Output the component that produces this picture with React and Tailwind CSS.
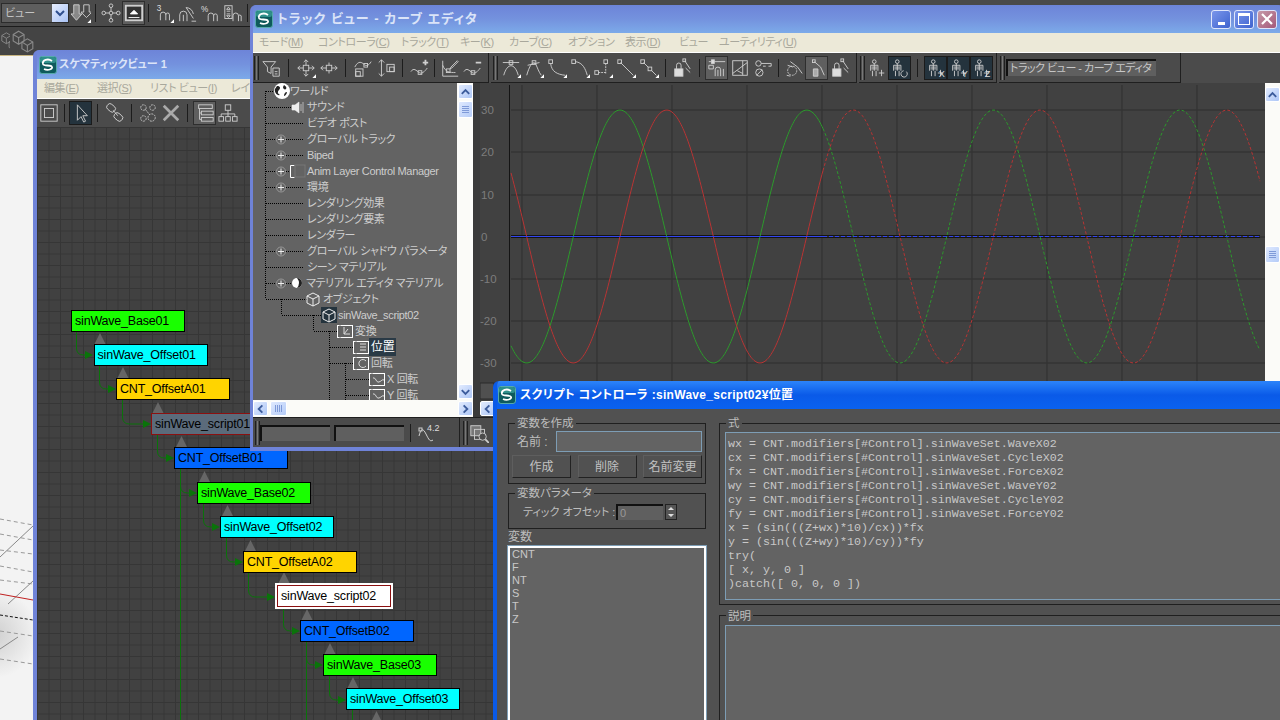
import React from "react";

const icons = {
  filter: <><path d="M1 4h14l-5 6v7l-4-2v-5z" /><path d="M12 11h7v9h-7z" /><path d="M14 15h3M14 17.500h3" /></>,
  move: <><path d="M11 2v18M2 11h18M8.500 4.500 11 2l2.500 2.500M8.500 17.500 11 20l2.500-2.500M4.500 8.500 2 11l2.500 2.500M17.500 8.500 20 11l-2.500 2.500" /><rect x="8" y="8" width="6" height="6" fill="#4c4c4c" /></>,
  moveH: <><path d="M11 5v12M2 11h18M4.500 8.500 2 11l2.500 2.500M17.500 8.500 20 11l-2.500 2.500" /><rect x="8" y="8" width="6" height="6" fill="#4c4c4c" /></>,
  scaleT: <><path d="M2 10c4-8 8-5 10-3s5 2 8-3" /><rect x="12" y="6" width="4" height="4" /><rect x="3" y="12" width="8" height="8" /><rect x="3" y="15" width="5" height="5" /></>,
  scaleV: <><path d="M6 2v18M3 5l3-3 3 3M3 17l3 3 3-3" /><rect x="12" y="7" width="8" height="8" /><rect x="15" y="10" width="5" height="5" /></>,
  addKey: <><path d="M1 15c3-5 6-1 9 1s6-1 9-5" /><rect x="9" y="14" width="4" height="4" /><path d="M14 5h6M17 2v6" strokeWidth="2" /></>,
  pen: <><path d="M3 3v17h17" /><path d="M3 8c3 8 8 8 14 8" /><rect x="7" y="12" width="4" height="4" /><path d="M12 10l7-7 1 1-7 7-2 1z" /></>,
  subKey: <><path d="M1 15c3-5 6-1 9 1s6-1 9-5" /><rect x="9" y="14" width="4" height="4" /><path d="M14 5h6" strokeWidth="2" /></>,
  tan1: <><path d="M2 5h18" /><rect x="9" y="3" width="4" height="4" /><path d="M3 19c4-14 12-14 16 0" /></>,
  tan2: <><path d="M4 8 17 5" /><rect x="9" y="3" width="4" height="4" /><path d="M3 19c4-14 8-16 10-12s3 8 6 12" /></>,
  tan3: <><rect x="2" y="2" width="4" height="4" /><path d="M4 6c1 9 7 12 16 13" /></>,
  tan4: <><rect x="2" y="2" width="4" height="4" /><path d="M6 4c8 1 11 8 13 15" /></>,
  step: <><rect x="12" y="2" width="4" height="4" /><rect x="2" y="14" width="4" height="4" /><path d="M6 16h8M14 6v12" strokeDasharray="2 1" /></>,
  line: <><rect x="2" y="2" width="4" height="4" /><path d="M5 5 19 19" /></>,
  line2: <><rect x="2" y="2" width="4" height="4" /><rect x="10" y="10" width="4" height="4" /><path d="M5 5l5 5M14 14l5 5" /></>,
  lock: <><path d="M14 3 20 12" /><rect x="12" y="1" width="3" height="3" /><rect x="3" y="12" width="9" height="8" fill="#ddd" /><path d="M5 12V8a2.500 2.500 0 0 1 5 0v4" /><path d="M15 11l5 5" /></>,
  magnet: <><path d="M2 4h3M8 4h12" /><rect x="5" y="2" width="3" height="4" fill="#ddd" /><path d="M9 20v-7a3 3 0 0 1 6 0v7M12 20v-7M18 20v-8" /><path d="M2 8h5v4H2z" /></>,
  box: <><rect x="3" y="3" width="16" height="16" /><path d="M3 17 19 5M8 14l6 3M14 3v16" /></>,
  key: <><circle cx="6" cy="6" r="3" /><path d="M9 6h11v3h-3M14 9h-3" /><circle cx="7" cy="16" r="4" /><path d="M4 19 10 13" /></>,
  ik1: <><path d="M7 4l8 6 5 7M4 8l6 2" /><circle cx="9" cy="14" r="5" strokeDasharray="2 1" /><path d="M7 20l-4-1" /></>,
  ik2: <><path d="M8 4l7 6 4 9" /><rect x="6" y="2" width="3" height="3" /><path d="M7 12h5v8H7z" fill="#aaa" /></>,
  body: <><circle cx="8" cy="4" r="2" /><path d="M8 6v8M4 8h8M4 8v6M12 8v6M6 14v6M10 14v6M5 10h6M5 12h6" /><path d="M16 13v7M13 16.500h6" /></>,
  bodyR: <><circle cx="8" cy="4" r="2" /><path d="M8 6v8M4 8h8M4 8v6M12 8v6M6 14v6M10 14v6M5 10h6M5 12h6" /><path d="M18 15a3.500 3.500 0 1 1-3-1" /></>,
  frame: <><rect x="2" y="2" width="18" height="18" /><rect x="6" y="6" width="10" height="10" /></>,
  arrow: <path d="M7 2v17l4-4 3 6 2-1-3-6h5z" />,
  chain: <><rect x="2" y="2" width="10" height="7" rx="3" transform="rotate(40 7 5)" /><rect x="10" y="12" width="10" height="7" rx="3" transform="rotate(40 15 15)" /><path d="M9 8l5 6" /></>,
  dots: <g strokeDasharray="2 1"><circle cx="6" cy="5" r="3" /><circle cx="16" cy="5" r="3" /><circle cx="6" cy="17" r="3" /><circle cx="15" cy="16" r="4" /><path d="M8 7l5 6" /></g>,
  cross: <path d="M3 3l16 16M19 3 3 19" strokeWidth="3" stroke="#aaa" />,
  treeIcon: <><rect x="4" y="2" width="15" height="4" /><rect x="7" y="9" width="13" height="4" /><rect x="7" y="16" width="13" height="4" /><path d="M5 6v12h2M5 11h2" /></>,
  hier: <><rect x="8" y="2" width="6" height="6" /><rect x="1" y="15" width="5" height="5" /><rect x="8.500" y="15" width="5" height="5" /><rect x="16" y="15" width="5" height="5" /><path d="M11 8v7M3.500 15v-3h15v3" /></>,
  dropNodes: <><path d="M3 2h6v10h3l-6 7-6-7h3z" fill="#888" /><path d="M14 2h6v8h3l-6 6-6-6h3z" /></>,
  nodes: <><circle cx="11" cy="11" r="2" /><circle cx="11" cy="3" r="2" /><circle cx="11" cy="19" r="2" /><circle cx="3" cy="11" r="2" /><circle cx="19" cy="11" r="2" /><path d="M11 5v4M11 13v4M5 11h4M13 11h4" /></>,
  screen: <><rect x="2" y="3" width="18" height="16" fill="#333" strokeWidth="2" /><path d="M7 12l4-4 4 4zM5 16h12" fill="#fff" stroke="#fff" /></>,
  snap3: <><path d="M7 19v-6a3 3 0 0 1 6 0v6M17 19v-6a2 2 0 0 0-4 0" /><text x="3" y="9" fontSize="9" fill="#ddd" stroke="none">3</text></>,
  snapA: <><path d="M3 20v-7a4 4 0 0 1 8 0v7M7 20v-7M16 20h5M18 17l-8-12" /><path d="M10 5a9 9 0 0 1 8 7" /></>,
  snapP: <><path d="M9 20v-6a3 3 0 0 1 6 0v6M19 20v-6a2 2 0 0 0-4 0" /><text x="1" y="10" fontSize="9" fill="#ddd" stroke="none">%</text></>,
  snapS: <><rect x="2" y="3" width="8" height="14" /><path d="M4 9h4M4 12h4M6 4.500 4 7h4zM6 16l-2-2h4z" /><path d="M11 20v-6a3 3 0 0 1 6 0v6M20 20v-6a2 2 0 0 0-3 0" /></>,
  cubes: <><path d="M2 5l5-3 5 3v6l-5 3-5-3zM2 5l5 3 5-3M7 8v6" /><path d="M10 12l5-3 5 3v6l-5 3-5-3z" /><path d="M10 12l5 3 5-3M15 15v6" /></>,
  fcurve: <><path d="M1 14c2-8 4-8 7-2s4 8 7 6" /><rect x="1" y="6" width="3" height="3" /><text x="9" y="9" fontSize="9" fill="#ddd" stroke="none">4.2</text></>,
  zoomKey: <><rect x="2" y="3" width="11" height="11" fill="#777" /><rect x="6" y="7" width="11" height="11" /><circle cx="15" cy="15" r="4" fill="#4c4c4c" /><path d="M18 18l4 4" strokeWidth="2" /></>,
};

const Icon = ({ name, fly, size = 22, letter }) => (
  <svg width={size} height={size} viewBox="0 0 22 22" fill="none" stroke="#cfcfcf" strokeWidth="1">
    {icons[name]}
    {letter && (
      <text x="14" y="21" fontSize="10" fill="#ddd" stroke="none">
        {letter}
      </text>
    )}
    {fly && <path d="M22 18v4h-4z" fill="#fff" stroke="none" />}
  </svg>
);

const Btn = ({ name, fly, on, dark, letter }) => (
  <div
    className={`flex h-[24px] w-[23px] shrink-0 items-center justify-center ${on ? "bg-[#5f5f5f] border border-[#2e2e2e]" : ""} ${dark ? "bg-[#24333d] border border-[#1b1b1b]" : ""}`}
  >
    <Icon name={name} fly={fly} letter={letter} size={20} />
  </div>
);

const Sep = ({ w }) => (
  <div className={`flex h-[18px] shrink-0 justify-center ${w}`}>
    <div className="w-px bg-[#1c1c1c]" />
  </div>
);

const Grip = ({ w }) => (
  <div className={`flex h-[24px] shrink-0 justify-center gap-px ${w}`}>
    <div className="w-px bg-[#1f1f1f]" />
    <div className="w-px bg-[#777]" />
    <div className="w-px bg-[#1f1f1f]" />
  </div>
);

const Logo = () => (
  <svg width="18" height="18" viewBox="0 0 18 18" className="shrink-0">
    <rect x="0.500" y="0.500" width="17" height="17" rx="2.500" fill="#0e5a5c" stroke="#5aa" />
    <rect x="1" y="1" width="16" height="6" rx="2" fill="#2f8f8a" />
    <path d="M13 5C9 2 3 4 4 8c1 3 8 0 9 3 1 2-4 4-8 2" fill="none" stroke="#fff" strokeWidth="1.800" />
  </svg>
);

const ScrollBtn = ({ dir, className = "" }) => {
  const d = { up: "M3 9l4-4 4 4", down: "M3 5l4 4 4-4", left: "M9 3 5 7l4 4", right: "M5 3l4 4-4 4" }[dir];
  return (
    <div className={`flex h-[15px] w-[15px] shrink-0 items-center justify-center rounded-[2px] border border-white bg-linear-to-br from-[#e2ebfe] to-[#adc6f6] ${className}`}>
      <svg width="14" height="14" viewBox="0 0 14 14" fill="none" stroke="#3c5c9c" strokeWidth="2">
        <path d={d} />
      </svg>
    </div>
  );
};

const Thumb = ({ vertical }) => (
  <div className={`flex shrink-0 items-center justify-center rounded-[2px] border border-white bg-linear-to-br from-[#dfe9fe] to-[#b5ccf8] ${vertical ? "h-[17px] w-[15px] flex-col gap-px" : "h-[15px] w-[17px] gap-px"}`}>
    {[0, 1, 2, 3].map((i) => (
      <div key={i} className={vertical ? "h-px w-[7px] bg-[#7f9ad8]" : "h-[7px] w-px bg-[#7f9ad8]"} />
    ))}
  </div>
);

const CloseBtns = () => (
  <div className="flex gap-[3px]">
    <div className="flex h-[19px] w-[20px] items-end justify-center rounded-[3px] border border-[#dfe6fb] bg-linear-to-br from-[#7a95ea] to-[#3f63cf] pb-[3px]">
      <div className="h-[3px] w-[7px] bg-white" />
    </div>
    <div className="flex h-[19px] w-[20px] items-center justify-center rounded-[3px] border border-[#dfe6fb] bg-linear-to-br from-[#7a95ea] to-[#3f63cf]">
      <div className="h-[12px] w-[12px] border border-t-[3px] border-white" />
    </div>
    <div className="flex h-[19px] w-[20px] items-center justify-center rounded-[3px] border border-[#dfe6fb] bg-linear-to-br from-[#c59aa8] to-[#a4587a]">
      <svg width="12" height="12" viewBox="0 0 12 12" stroke="#fff" strokeWidth="2.200">
        <path d="M1 1l10 10M11 1 1 11" />
      </svg>
    </div>
  </div>
);

const MenuLabel = ({ text }) => {
  const m = text.match(/^(.*\()(.)(\))$/);
  if (!m) return text;
  return (
    <>
      {m[1]}
      <span className="underline">{m[2]}</span>
      {m[3]}
    </>
  );
};

const MenuBar = ({ items, pad }) => (
  <div className={`flex h-[19px] shrink-0 items-center bg-[#ece9d8] text-[11px] tracking-[-0.4px] text-[#a9a89c] ${pad}`}>
    {items.map(([label, w]) => (
      <div key={label} className={`shrink-0 whitespace-nowrap ${w}`}>
        <MenuLabel text={label} />
      </div>
    ))}
  </div>
);

const trackMenu = [
  ["モード(M)", "w-[59px]"],
  ["コントローラ(C)", "w-[83px]"],
  ["トラック(T)", "w-[59px]"],
  ["キー(K)", "w-[49px]"],
  ["カーブ(C)", "w-[59px]"],
  ["オプション", "w-[57px]"],
  ["表示(D)", "w-[54px]"],
  ["ビュー", "w-[40px]"],
  ["ユーティリティ(U)", "w-[90px]"],
];

const schemMenu = [
  ["編集(E)", "w-[53px]"],
  ["選択(S)", "w-[53px]"],
  ["リスト ビュー(I)", "w-[81px]"],
  ["レイアウト", "w-[60px]"],
];

const treeRows = [
  ["ワールド", "pl-[37px]"],
  ["サウンド", "pl-[54px]"],
  ["ビデオ ポスト", "pl-[54px]"],
  ["グローバル トラック", "pl-[54px]"],
  ["Biped", "pl-[54px]"],
  ["Anim Layer Control Manager", "pl-[54px]"],
  ["環境", "pl-[54px]"],
  ["レンダリング効果", "pl-[54px]"],
  ["レンダリング要素", "pl-[54px]"],
  ["レンダラー", "pl-[54px]"],
  ["グローバル シャドウ パラメータ", "pl-[54px]"],
  ["シーン マテリアル", "pl-[54px]"],
  ["マテリアル エディタ マテリアル", "pl-[53px]"],
  ["オブジェクト", "pl-[70px]"],
  ["sinWave_script02", "pl-[85px]"],
  ["変換", "pl-[102px]"],
  ["位置", "pl-[116px]", true],
  ["回転", "pl-[118px]"],
  ["X 回転", "pl-[134px]"],
  ["Y 回転", "pl-[134px]"],
];

const Cube = ({ x, y }) => (
  <path
    transform={`translate(${x} ${y})`}
    d="M0 3l6-3 6 3v7l-6 3-6-3zM0 3l6 3 6-3M6 6v7"
    fill="none"
    stroke="#eee"
  />
);

const CtrlBox = ({ x, y, w = 15, inner }) => (
  <g transform={`translate(${x} ${y})`} fill="none" stroke="#fff">
    <rect x="0.500" y="0.500" width={w} height="12" />
    <path d="M3 0.500v3M3 5v3M3 9.500v3" stroke="#636363" strokeWidth="1.500" />
    <path d={inner} stroke="#ddd" />
  </g>
);

const TreeDrawing = () => (
  <svg className="absolute left-0 top-0" width="204" height="317" viewBox="253 83 204 317">
    <g fill="none" stroke="#000" strokeDasharray="1 1" shapeRendering="crispEdges">
      <path d="M265.500 91v208" />
      <path d="M265.500 91.500h8M265.500 107.500h26M265.500 123.500h38M265.500 139.500h38M265.500 155.500h38M265.500 171.500h24M265.500 187.500h38M265.500 203.500h38M265.500 219.500h38M265.500 235.500h38M265.500 251.500h38M265.500 267.500h38M265.500 283.500h26M265.500 299.500h42" />
      <path d="M281.500 299v16M281.500 315.500h40" />
      <path d="M313.500 315v16M313.500 331.500h24M329.500 331v69M329.500 347.500h24M329.500 363.500h24M345.500 363v37M345.500 379.500h24M345.500 395.500h24" />
    </g>
    {[139, 155, 171, 187, 251, 283].map((y) => (
      <g key={y}>
        <circle cx="281" cy={y + 0.5} r="4.500" fill="#636363" stroke="#999" />
        <path d={`M278 ${y + 0.5}h6M281 ${y - 2.5}v6`} stroke="#eee" />
      </g>
    ))}
    <circle cx="282" cy="91" r="8" fill="#fff" />
    <path d="M277 86c3 0 4 2 2 4s-1 4 1 5c-3 1-6-3-5-6M284 85c2 1 3 3 2 4s-3 0-3-2M287 92c0 2-2 4-3 4 0-2 1-4 3-4z" fill="#222" />
    <path d="M292 105h3l4-3v11l-4-3h-3zM301 104v7M303 102v11" fill="#eee" stroke="#eee" strokeWidth="0.600" />
    <path d="M294.500 165.500h-4v12h4" fill="none" stroke="#fff" />
    <rect x="295" y="165" width="10" height="12" fill="none" stroke="#777" />
    <circle cx="297" cy="283" r="5" fill="#fff" />
    <path d="M297 278a5 5 0 0 1 0 10 8 8 0 0 0 0-10z" fill="#222" />
    <Cube x="307" y="293" />
    <rect x="321" y="307" width="16" height="16" fill="#24333d" />
    <Cube x="323" y="309" />
    <CtrlBox x="337" y="325" inner="M7 2v7h6M7 9l4-5" />
    <CtrlBox x="353" y="341" inner="M7 3h6M7 6h6M7 9h6" />
    <CtrlBox x="353" y="357" inner="M13 4a4 4 0 1 0 0 5" />
    <CtrlBox x="369" y="373" inner="M4 5c3-1 3 5 6 4s3-3 5-2" />
    <CtrlBox x="369" y="389" inner="M4 5c3-1 3 5 6 4s3-3 5-2" />
  </svg>
);

const xs = Array.from({ length: 750 }, (_, i) => 511 + i);
const W = (2 * Math.PI) / 186.7;
const py = (v) => 236.5 - v * 4.215;
const line = (fn, a, b) =>
  xs
    .filter((x) => x >= a && x <= b)
    .map((x) => `${x},${py(fn(x)).toFixed(1)}`)
    .join(" ");
const green = (x) => 30 * Math.cos(W * (x - 620));
const red = (x) => 30 * Math.sin(W * (x - 620));

const CurveGraph = () => (
  <svg className="absolute inset-0" width="785" height="334" viewBox="480 83 785 334">
    <g stroke="#343434" fill="none">
      {[110, 152, 195, 237, 279, 321, 363].map((y) => (
        <path key={y} d={`M511 ${y}H1265`} strokeWidth="1.600" />
      ))}
      {[522, 597, 672, 747, 822, 897, 972, 1047, 1122, 1197].map((x) => (
        <path key={x} d={`M${x} 85V381`} strokeWidth="1.300" />
      ))}
    </g>
    <path d="M509.500 85V381" stroke="#141414" />
    <path d="M511 235.500H1260M511 237.500H1260" stroke="#141414" />
    <polyline points={line(green, 511, 823)} fill="none" stroke="#2c9a2c" />
    <polyline points={line(red, 511, 823)} fill="none" stroke="#b83434" />
    <polyline points={line(green, 823, 1260)} fill="none" stroke="#2c9a2c" strokeDasharray="3 2" />
    <polyline points={line(red, 823, 1260)} fill="none" stroke="#b83434" strokeDasharray="3 2" />
    <path d="M511 236.500H823" stroke="#3346f0" />
    <path d="M823 236.500H1260" stroke="#3346f0" strokeDasharray="4 2" />
    {[[30, 110], [20, 152], [10, 195], [0, 237], [-10, 279], [-20, 321], [-30, 363]].map(([v, y]) => (
      <text key={v} x={v === 0 ? 481 : v < 0 ? 480 : 481} y={y + 4} fontSize="11.500" fill="#7d7d7d">
        {v}
      </text>
    ))}
    <rect x="480" y="383" width="14" height="16" fill="#505050" stroke="#2a2a2a" />
  </svg>
);

const nodes = [
  ["sinWave_Base01", "left-[34px] top-[183px] w-[114px] bg-[#19ff00]"],
  ["sinWave_Offset01", "left-[56.500px] top-[217px] w-[114px] bg-[#00ffff]"],
  ["CNT_OffsetA01", "left-[79px] top-[251px] w-[114px] bg-[#ffd400]"],
  ["sinWave_script01", "left-[114px] top-[286px] w-[114px] bg-[#5b6b7b] !border-[#8b1010] text-[#dcdcdc]"],
  ["CNT_OffsetB01", "left-[137px] top-[320px] w-[114px] bg-[#0066ff]"],
  ["sinWave_Base02", "left-[160px] top-[355px] w-[114px] bg-[#19ff00]"],
  ["sinWave_Offset02", "left-[183px] top-[389px] w-[114px] bg-[#00ffff]"],
  ["CNT_OffsetA02", "left-[206px] top-[424px] w-[114px] bg-[#ffd400]"],
  ["sinWave_script02", "left-[240px] top-[458px] w-[114px] bg-white !border-[#8b1010] outline-2 outline-white"],
  ["CNT_OffsetB02", "left-[263px] top-[493px] w-[114px] bg-[#0066ff]"],
  ["sinWave_Base03", "left-[286px] top-[527px] w-[114px] bg-[#19ff00]"],
  ["sinWave_Offset03", "left-[309px] top-[561px] w-[114px] bg-[#00ffff]"],
];

const triangles = [100, 123, 158, 181.5, 204.5, 227.5, 250.5, 284, 307, 330, 353, 376.5];

const SchematicLinks = () => (
  <svg className="absolute inset-0" width="457" height="593" viewBox="37 127 457 593" fill="none">
    {triangles.map((x, i) => {
      const y = [344, 378, 413, 447, 482, 516, 551, 583, 620, 654, 688, 722][i];
      return <path key={x} d={`M${x} ${y - 11}l5.500 11h-11z`} fill="#666" />;
    })}
    <g stroke="#0a730a">
      <path d="M76.500 332v16q0 7 7 7h4M99.500 366v16q0 7 7 7h4M122.500 400v17q0 7 7 7h16M157.500 435v16q0 7 7 7h4" />
      <path d="M180.500 469V720M180.500 486q0 7 7 7h4M203.500 504v16q0 7 7 7h4M226.500 538v17q0 7 7 7h4M248.500 573v17q0 7 7 7h14M283.500 609v15q0 7 7 7h4" />
      <path d="M306.500 642V720M306.500 658q0 7 7 7h4M329.500 676v17q0 7 7 7h4M352.500 710V720" />
    </g>
    <g fill="#0a730a">
      <path d="M85 351l8 4-8 4zM108 385l8 4-8 4zM143 420l8 4-8 4zM166 454l8 4-8 4zM189 489l8 4-8 4zM212 523l8 4-8 4zM235 558l8 4-8 4zM267 593l8 4-8 4zM292 627l8 4-8 4zM315 661l8 4-8 4zM338 696l8 4-8 4z" />
    </g>
  </svg>
);

const GroupBox = ({ title, className, children }) => (
  <fieldset className={`border border-[#1f1f1f] ${className}`}>
    <legend className="ml-[6px] h-4 px-[2px] text-[11.500px] leading-4 text-[#bdbdbd]">{title}</legend>
    {children}
  </fieldset>
);

const DlgButton = ({ label, w }) => (
  <div className={`flex h-[23px] items-center justify-center border border-t-[#5e5e5e] border-l-[#5e5e5e] border-r-[#222] border-b-[#222] text-[12px] text-[#c2c2c2] ${w}`}>
    {label}
  </div>
);

const code = [
  "wx = CNT.modifiers[#Control].sinWaveSet.WaveX02",
  "cx = CNT.modifiers[#Control].sinWaveSet.CycleX02",
  "fx = CNT.modifiers[#Control].sinWaveSet.ForceX02",
  "wy = CNT.modifiers[#Control].sinWaveSet.WaveY02",
  "cy = CNT.modifiers[#Control].sinWaveSet.CycleY02",
  "fy = CNT.modifiers[#Control].sinWaveSet.ForceY02",
  "x = (sin(((Z+wx)*10)/cx))*fx",
  "y = (sin(((Z+wy)*10)/cy))*fy",
  "try(",
  "[ x, y, 0 ]",
  ")catch([ 0, 0, 0 ])",
];

export default function App() {
  return (
    <div className="relative flex h-[720px] w-[1280px] flex-col overflow-hidden bg-[#444] font-['Liberation_Sans','Noto_Sans_CJK_JP',sans-serif] [font-feature-settings:'palt']">
      {/* main max toolbar */}
      <div className="flex h-[27px] shrink-0 items-center border-b border-[#1c1c1c] bg-[#4a4a4a]">
        <div className="ml-px flex h-[20px] w-[68px] items-center justify-between border border-[#2c2c2c] bg-[#5e5e5e] text-[11px] text-[#c4c4c4]">
          <span className="pl-[3px]">ビュー</span>
          <div className="flex h-full w-[16px] items-center justify-center bg-linear-to-br from-[#e6edfd] to-[#a9c2f5]">
            <svg width="10" height="10" viewBox="0 0 10 10" fill="none" stroke="#2f4f8f" strokeWidth="2">
              <path d="M1 3l4 4 4-4" />
            </svg>
          </div>
        </div>
        <Btn name="dropNodes" fly />
        <Sep w="w-[7px]" />
        <Btn name="nodes" />
        <Btn name="screen" on />
        <Sep w="w-[7px]" />
        <Btn name="snap3" fly />
        <Btn name="snapA" />
        <Btn name="snapP" />
        <Btn name="snapS" />
        <Sep w="w-[6px]" />
      </div>
      {/* second bar */}
      <div className="flex h-[29px] shrink-0 items-center border-b border-[#c9b682] bg-[#444]">
        <div className="w-[10px] overflow-hidden opacity-50"><Icon name="cubes" size={20} /></div>
        <div className="ml-[1px] opacity-50"><Icon name="cubes" size={24} /></div>
      </div>
      {/* viewport */}
      <div className="relative min-h-0 flex-1 bg-[#f3f3f3]">
        <svg className="absolute left-0 top-0" width="33" height="663" viewBox="0 57 33 663" fill="none">
          <defs>
            <radialGradient id="vig">
              <stop offset="0" stopColor="#cfcfcf" />
              <stop offset="1" stopColor="#f3f3f3" />
            </radialGradient>
          </defs>
          <circle cx="-6" cy="635" r="44" fill="url(#vig)" />
          <g stroke="#999" strokeDasharray="4 3">
            <path d="M0 520l33 6M0 535l33 6M0 551l33 4M0 567l33 6M0 581l33 4M0 632l33 5M0 660l33 5" />
          </g>
          <path d="M0 558 33 527M8 605 33 582M0 650l18-12" stroke="#888" />
          <path d="M0 595l33 6" stroke="#c02020" />
          <path d="M0 616l33 5" stroke="#111" strokeDasharray="3 2" />
        </svg>
      </div>

      {/* schematic view window */}
      <div className="absolute left-[33px] top-[50px] flex h-[680px] w-[464px] flex-col overflow-hidden rounded-t-md border-x-4 border-[#6f83d8] bg-[#6f83d8]">
        <div className="-mx-1 flex h-[29px] shrink-0 items-center gap-[2px] bg-linear-to-b from-[#6d84d8] via-[#7492de] to-[#7caae9] pl-[6px] text-[11px] font-bold text-[#dbe4f8]">
          <Logo />
          スケマティックビュー 1
        </div>
        <MenuBar items={schemMenu} pad="pl-[7px]" />
        <div className="flex h-[29px] shrink-0 items-center border-t border-white bg-[#4b4b4b]">
          <Btn name="frame" />
          <Sep w="w-[9px]" />
          <Btn name="arrow" dark />
          <Sep w="w-[11px]" />
          <Btn name="chain" />
          <Sep w="w-[10px]" />
          <Btn name="dots" />
          <Btn name="cross" />
          <Sep w="w-[11px]" />
          <Btn name="treeIcon" on />
          <Btn name="hier" />
        </div>
        <div className="relative min-h-0 flex-1 bg-[#414141] bg-[linear-gradient(#363636_1px,transparent_1px),linear-gradient(90deg,#363636_1px,transparent_1px)] bg-[size:11.5px_11.5px]">
          <SchematicLinks />
          {nodes.map(([label, cls]) => (
            <div
              key={label}
              className={`absolute flex h-[22px] items-center whitespace-nowrap border border-black pl-[3px] text-[12.500px] tracking-[-0.2px] text-black ${cls}`}
            >
              {label}
            </div>
          ))}
        </div>
      </div>

      {/* track view window */}
      <div className="absolute left-[250px] top-[5px] flex h-[446px] w-[1034px] flex-col overflow-hidden rounded-t-md border-x-[3px] border-b-4 border-[#6f83d8] bg-[#6f83d8]">
        <div className="flex h-[28px] shrink-0 items-center justify-between bg-linear-to-b from-[#6d84d8] via-[#7492de] to-[#7caae9] pr-[4px] text-[13px] font-bold tracking-[1px] text-[#dbe4f8]">
          <div className="flex items-center gap-[4px] pl-[2px]">
            <Logo />
            トラック ビュー - カーブ エディタ
          </div>
          <CloseBtns />
        </div>
        <MenuBar items={trackMenu} pad="pl-[6px]" />
        <div className="flex h-[31px] shrink-0 items-stretch gap-[2px] border-t border-white bg-[#4b4b4b]">
          <div className="flex w-[236px] items-center border-r border-b border-[#1f1f1f]">
            <Grip w="w-[7px]" />
            <Btn name="filter" />
            <Sep w="w-[11px]" />
            <Btn name="move" fly />
            <Btn name="moveH" />
            <Sep w="w-[11px]" />
            <Btn name="scaleT" />
            <Btn name="scaleV" />
            <Sep w="w-[11px]" />
            <Btn name="addKey" />
            <Sep w="w-[7px]" />
            <Btn name="pen" />
            <Btn name="subKey" />
          </div>
          <div className="flex w-[366px] items-center border-r border-b border-[#1f1f1f]">
            <Grip w="w-[8px]" />
            <Btn name="tan1" fly />
            <Btn name="tan2" fly />
            <Btn name="tan3" fly />
            <Btn name="tan4" fly />
            <Btn name="step" fly />
            <Btn name="line" fly />
            <Btn name="line2" fly />
            <Sep w="w-[10px]" />
            <Btn name="lock" />
            <Sep w="w-[12px]" />
            <Btn name="magnet" on />
            <Btn name="box" />
            <Btn name="key" />
            <Sep w="w-[8px]" />
            <Btn name="ik1" />
            <Btn name="ik2" on />
            <Btn name="lock" />
          </div>
          <div className="flex w-[138px] items-center border-r border-b border-[#1f1f1f]">
            <Grip w="w-[6px]" />
            <Btn name="body" />
            <Btn name="bodyR" dark />
            <Sep w="w-[13px]" />
            <Btn name="body" dark letter="X" />
            <Btn name="body" dark letter="Y" />
            <Btn name="body" dark letter="Z" />
          </div>
          <div className="flex w-[182px] items-center border-r border-b border-[#1f1f1f]">
            <Grip w="w-[7px]" />
            <div className="flex h-[17px] w-[150px] items-center whitespace-nowrap border-l-2 border-t-2 border-[#111] bg-[#5f5f5f] pl-[2px] text-[11px] tracking-[-0.5px] text-[#c8c8c8]">
              トラック ビュー - カーブ エディタ
            </div>
          </div>
        </div>
        <div className="flex min-h-0 flex-1 bg-[#3d3d3d]">
          {/* tree column */}
          <div className="flex w-[220px] shrink-0 flex-col">
            <div className="flex min-h-0 flex-1">
              <div className="relative w-[204px] shrink-0 overflow-hidden bg-[#636363] text-[11px] tracking-[-0.35px] text-[#cdcdcd]">
                <TreeDrawing />
                <div className="relative flex flex-col">
                  {treeRows.map(([label, pad, hi]) => (
                    <div key={label} className={`flex h-4 items-center whitespace-nowrap ${pad}`}>
                      <span className={hi ? "bg-[#2a3a46] px-[2px] text-[12px] text-white" : ""}>{label}</span>
                    </div>
                  ))}
                </div>
              </div>
              <div className="flex w-[16px] shrink-0 flex-col items-center bg-[#fbfbf8] py-px">
                <ScrollBtn dir="up" />
                <div className="mt-[2px]"><Thumb vertical /></div>
                <div className="flex-1" />
                <ScrollBtn dir="down" />
              </div>
            </div>
            <div className="flex h-[17px] shrink-0 items-center bg-[#fbfbf8]">
              <ScrollBtn dir="left" />
              <div className="ml-[2px]"><Thumb /></div>
              <div className="flex-1" />
              <ScrollBtn dir="right" />
            </div>
          </div>
          <div className="w-[7px] shrink-0 bg-[#3a3a3a]" />
          {/* curve column */}
          <div className="flex min-w-0 flex-1">
            <div className="relative w-[785px] shrink-0 overflow-hidden bg-[#414141]">
              <CurveGraph />
              <div className="absolute bottom-[1px] left-0"><ScrollBtn dir="left" /></div>
            </div>
            <div className="flex w-[15px] shrink-0 flex-col items-center bg-[#fbfbf8] pt-[4px]">
              <ScrollBtn dir="up" />
              <div className="mt-[144px]"><Thumb vertical /></div>
            </div>
          </div>
        </div>
        {/* bottom bar */}
        <div className="flex h-[30px] shrink-0 items-stretch bg-[#4b4b4b]">
          <div className="flex w-[207px] items-center border-r border-t border-[#1f1f1f] pl-[1px]">
            <Grip w="w-[6px]" />
            <div className="h-[16px] w-[70px] border-l-2 border-t-2 border-[#111] bg-[#5f5f5f]" />
            <div className="ml-[4px] h-[16px] w-[70px] border-l-2 border-t-2 border-[#111] bg-[#5f5f5f]" />
            <Sep w="w-[12px]" />
            <div className="ml-[2px]"><Icon name="fcurve" size={22} /></div>
          </div>
          <div className="flex flex-1 items-center border-t border-[#1f1f1f] pl-[2px]">
            <Grip w="w-[7px]" />
            <Icon name="zoomKey" size={20} />
          </div>
        </div>
      </div>

      {/* script controller window */}
      <div className="absolute left-[493px] top-[381px] flex h-[345px] w-[800px] flex-col overflow-hidden rounded-t-md border-x-4 border-[#0a5ae8] bg-[#515151]">
        <div className="-mx-1 flex h-[28px] shrink-0 items-center gap-[4px] bg-linear-to-b from-[#2c84fa] via-[#0a5ae8] to-[#0a62f0] pl-[5px] text-[12px] font-bold tracking-[0.3px] text-white">
          <Logo />
          スクリプト コントローラ :sinWave_script02¥位置
        </div>
        <div className="flex min-h-0 flex-1 gap-[13px] pl-[11px] pt-[6px]">
          <div className="flex w-[198px] shrink-0 flex-col">
            <GroupBox title="変数を作成" className="h-[69px]">
              <div className="flex h-[21px] items-center justify-between pl-[8px] pr-[3px] text-[12px] text-[#bdbdbd]">
                <span>名前 :</span>
                <div className="h-[21px] w-[146px] border border-[#7d9db5] bg-[#636363]" />
              </div>
              <div className="mt-[3px] flex justify-between px-[3px]">
                <DlgButton label="作成" w="w-[59px]" />
                <DlgButton label="削除" w="w-[59px]" />
                <DlgButton label="名前変更" w="w-[59px]" />
              </div>
            </GroupBox>
            <GroupBox title="変数パラメータ" className="mt-[1px] h-[44px]">
              <div className="mt-[3px] flex h-[16px] items-center text-[11px] text-[#bdbdbd]">
                <span className="w-[107px] whitespace-nowrap pl-[14px]">ティック オフセット :</span>
                <div className="flex h-[16px] w-[47px] items-center border-l-2 border-t-2 border-[#111] bg-[#5f5f5f] pl-[2px] text-[#999]">0</div>
                <svg className="ml-[2px]" width="12" height="16" viewBox="0 0 12 16" stroke="#222">
                  <rect x="0.500" y="0.500" width="11" height="15" fill="#555" />
                  <path d="M3 6l3-3 3 3zM3 10l3 3 3-3z" fill="#ddd" stroke="none" />
                </svg>
              </div>
            </GroupBox>
            <div className="h-[17px] text-[12px] leading-[16px] text-[#bdbdbd]">変数</div>
            <div className="flex-1 border-2 border-white bg-[#636363] pl-[2px] outline outline-[#7d9db5] text-[11px] leading-[13px] text-[#c8c8c8]">
              {["CNT", "F", "NT", "S", "T", "Z"].map((v) => (
                <div key={v}>{v}</div>
              ))}
            </div>
          </div>
          <div className="flex w-[620px] shrink-0 flex-col">
            <GroupBox title="式" className="h-[192px]">
              <div className="mx-[5px] mt-[1px] h-[168px] border border-[#7d9db5] bg-[#636363] pl-[2px] pt-[4px] font-['Liberation_Mono',monospace] text-[11.67px] leading-[14px] text-[#c8c8c8]">
                {code.map((l) => (
                  <div key={l} className="whitespace-pre">{l}</div>
                ))}
              </div>
            </GroupBox>
            <GroupBox title="説明" className="mt-[3px] h-[120px]">
              <div className="mx-[5px] mt-[1px] h-[100px] border border-[#7d9db5] bg-[#636363]" />
            </GroupBox>
          </div>
        </div>
      </div>
    </div>
  );
}
